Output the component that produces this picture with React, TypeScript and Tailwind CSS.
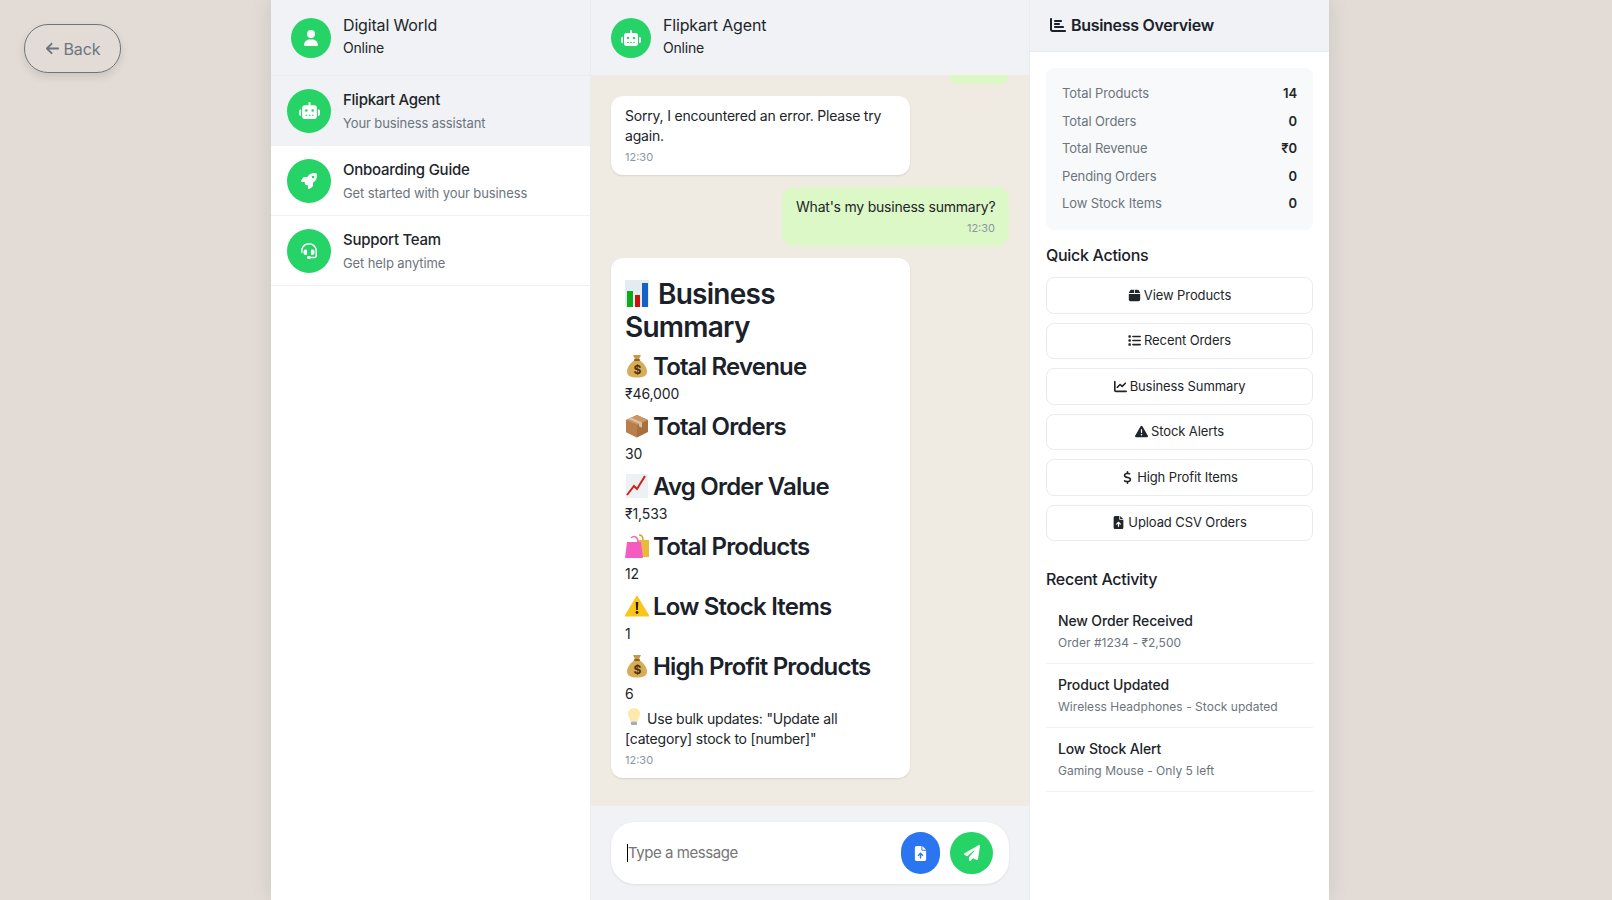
import type { ReactNode } from "react";
import {
  FaArrowLeft,
  FaBox,
  FaChartBar,
  FaChartLine,
  FaDollarSign,
  FaFileArrowUp,
  FaHeadset,
  FaList,
  FaPaperPlane,
  FaRobot,
  FaRocket,
  FaTriangleExclamation,
  FaUser,
} from "react-icons/fa6";

// the reference uses colour emoji and no colour emoji font is installed, so they are small drawings
function BarsEmoji() {
  return (
    <svg viewBox="0 0 24 27" className="inline-block w-[24px] h-[27px] align-[-3px] mr-[9px]">
      <rect width="24" height="27" fill="#e4ecf2" />
      <rect x="2" y="11" width="6" height="16" fill="#0eaa1e" />
      <rect x="10" y="15" width="5" height="12" fill="#c8140c" />
      <rect x="17" y="3" width="6" height="24" fill="#1463c4" />
    </svg>
  );
}

function MoneyEmoji() {
  return (
    <svg viewBox="0 0 24 24" className="inline-block w-[24px] h-[24px] align-[-3px] mr-[4px]">
      <path d="M8 1h8l-2.400 5h-3.200z" fill="#c99a45" />
      <path d="M9.500 6h5c4 3 7.500 7 7.500 11.500 0 4.500-4 6-10 6s-10-1.500-10-6C2 13 5.500 9 9.500 6z" fill="#d9ac58" />
      <rect x="9" y="5" width="6" height="2" rx="1" fill="#8a6428" />
      <text x="12" y="20" textAnchor="middle" fontSize="12" fontWeight="700" fill="#4a3312" fontFamily="Inter, sans-serif">$</text>
    </svg>
  );
}

function BoxEmoji() {
  return (
    <svg viewBox="0 0 24 24" className="inline-block w-[24px] h-[24px] align-[-3px] mr-[4px]">
      <path d="M12 1 23 6v12l-11 5.500L1 18V6z" fill="#a9703f" />
      <path d="M12 1 23 6l-11 5L1 6z" fill="#c99766" />
      <path d="M12 11v12.500L1 18V6z" fill="#b87f4c" />
      <path d="m6 3.500 11 5v5l-3-1V9.500L3.500 5z" fill="#dcc0a0" />
    </svg>
  );
}

function TrendEmoji() {
  return (
    <svg viewBox="0 0 24 24" className="inline-block w-[24px] h-[24px] align-[-3px] mr-[4px]">
      <rect x="1" width="22" height="24" fill="#eef1f4" />
      <path d="M2 21 9 12l3 3 8-13" fill="none" stroke="#d0201c" strokeWidth="2" />
    </svg>
  );
}

function BagsEmoji() {
  return (
    <svg viewBox="0 0 24 24" className="inline-block w-[24px] h-[24px] align-[-3px] mr-[4px]">
      <path d="M14 1c3 0 4 2 4 5" fill="none" stroke="#d9a520" strokeWidth="1.500" />
      <rect x="12" y="6" width="12" height="17" fill="#eab93c" />
      <path d="M6 4c3-3 7-1 7 4" fill="none" stroke="#f06cc0" strokeWidth="1.500" />
      <path d="M2 8h14l2 16H0z" fill="#f45cc0" />
    </svg>
  );
}

function WarnEmoji() {
  return (
    <svg viewBox="0 0 24 24" className="inline-block w-[24px] h-[24px] align-[-3px] mr-[4px]">
      <path d="M12 2 24 22H0z" fill="#fbc51a" stroke="#fbc51a" strokeLinejoin="round" />
      <path d="M10.700 8h2.600l-.5 8h-1.600z" fill="#222" />
      <circle cx="12" cy="18.500" r="1.400" fill="#222" />
    </svg>
  );
}

function BulbEmoji() {
  return (
    <svg viewBox="0 0 16 20" className="inline-block w-[14px] h-[20px] align-[-3px] mr-[6px] ml-[2px]">
      <path d="M8 0c4.500 0 7 3 7 6.500 0 3-2.500 4.500-3 8H4c-.5-3.500-3-5-3-8C1 3 3.500 0 8 0z" fill="#fde9a8" />
      <rect x="4.500" y="15" width="7" height="4" rx="1" fill="#a9acb0" />
    </svg>
  );
}

const chats = [
  { name: "Flipkart Agent", sub: "Your business assistant", icon: <FaRobot className="text-[21px]" />, active: true },
  { name: "Onboarding Guide", sub: "Get started with your business", icon: <FaRocket />, active: false },
  { name: "Support Team", sub: "Get help anytime", icon: <FaHeadset />, active: false },
];

const stats = [
  ["Total Products", "14"],
  ["Total Orders", "0"],
  ["Total Revenue", "₹0"],
  ["Pending Orders", "0"],
  ["Low Stock Items", "0"],
];

const actions = [
  { label: "View Products", icon: <FaBox /> },
  { label: "Recent Orders", icon: <FaList /> },
  { label: "Business Summary", icon: <FaChartLine /> },
  { label: "Stock Alerts", icon: <FaTriangleExclamation /> },
  { label: "High Profit Items", icon: <FaDollarSign /> },
  { label: "Upload CSV Orders", icon: <FaFileArrowUp /> },
];

const activity = [
  ["New Order Received", "Order #1234 - ₹2,500"],
  ["Product Updated", "Wireless Headphones - Stock updated"],
  ["Low Stock Alert", "Gaming Mouse - Only 5 left"],
];

const summary: { emoji: ReactNode; title: string; value: string }[] = [
  { emoji: <MoneyEmoji />, title: "Total Revenue", value: "₹46,000" },
  { emoji: <BoxEmoji />, title: "Total Orders", value: "30" },
  { emoji: <TrendEmoji />, title: "Avg Order Value", value: "₹1,533" },
  { emoji: <BagsEmoji />, title: "Total Products", value: "12" },
  { emoji: <WarnEmoji />, title: "Low Stock Items", value: "1" },
  { emoji: <MoneyEmoji />, title: "High Profit Products", value: "6" },
];

function Avatar({ big, children }: { big?: boolean; children: ReactNode }) {
  return (
    <div className={`rounded-full bg-[#25d366] text-white flex items-center justify-center shrink-0 text-[16px] ${big ? "w-11 h-11" : "w-10 h-10"}`}>
      {children}
    </div>
  );
}

function Header({ name, icon }: { name: string; icon: ReactNode }) {
  return (
    <div className="h-[75px] bg-[#f0f2f5] pl-5 flex items-center gap-3 shrink-0">
      <Avatar>{icon}</Avatar>
      <div className="pb-1">
        <div className="text-[16px] leading-[24px] tracking-[-0.17px] text-[#212529]">{name}</div>
        <div className="text-[14px] leading-[21px] tracking-[-0.2px] text-[#212529]">Online</div>
      </div>
    </div>
  );
}

export default function App() {
  return (
    <div className="h-[900px] overflow-hidden bg-[#e2dbd6] font-['Inter',sans-serif] text-[#212529] flex relative">
      <button className="absolute left-6 top-6 w-[97px] h-[49px] rounded-[24px] border border-[#6c757d] text-[#6c757d] text-[16px] tracking-[-0.1px] flex items-center justify-center gap-[4px] shadow-[0_4px_8px_rgba(0,0,0,0.1)]">
        <FaArrowLeft className="text-[15px]" />
        Back
      </button>

      <div className="ml-[271px] w-[1058px] flex bg-white shadow-[0_0_20px_rgba(0,0,0,0.1)]">
        <aside className="w-[320px] shrink-0 border-r border-[#e9ecef] flex flex-col">
          <div className="border-b border-[#e9ecef]">
            <Header name="Digital World" icon={<FaUser />} />
          </div>
          {chats.map((c) => (
            <div key={c.name} className={`h-[70px] pl-4 flex items-center gap-3 border-b border-[#f0f2f5] ${c.active ? "bg-[#f0f2f5]" : ""}`}>
              <Avatar big>{c.icon}</Avatar>
              <div>
                <div className="text-[15px] leading-[24px] tracking-[-0.25px] font-medium text-[#212529]">{c.name}</div>
                <div className="text-[13px] leading-[20px] mt-[1px] mb-[1px] tracking-[-0.1px] text-[#6c757d]">{c.sub}</div>
              </div>
            </div>
          ))}
        </aside>

        <main className="w-[439px] shrink-0 border-r border-[#e9ecef] flex flex-col">
          <Header name="Flipkart Agent" icon={<FaRobot className="text-[20px]" />} />
          <div className="flex-1 bg-[#efeae2] px-5 flex flex-col overflow-hidden">
            <div className="self-end w-[59px] h-[9px] bg-[#dcf8c6] rounded-b-lg" />
            <div className="mt-3 w-[299px] bg-white rounded-xl px-[14px] pt-[10px] pb-[10px] shadow-[0_1px_2px_rgba(0,0,0,0.1)]">
              <p className="text-[14px] leading-[20px] tracking-[-0.2px]">Sorry, I encountered an error. Please try again.</p>
              <p className="mt-[3px] text-[11px] leading-[16px] text-[#8c969f]">12:30</p>
            </div>
            <div className="mt-3 self-end w-[227px] h-[59px] bg-[#dcf8c6] rounded-xl px-[14px] pt-[10px] pb-[10px]">
              <p className="text-[14px] leading-[20px] tracking-[-0.22px] text-right whitespace-nowrap">What's my business summary?</p>
              <p className="mt-[3px] text-[11px] leading-[16px] text-[#8c969f] text-right">12:30</p>
            </div>
            <div className="mt-3 w-[299px] h-[520px] bg-white rounded-xl px-[14px] pt-[20px] shadow-[0_1px_2px_rgba(0,0,0,0.1)]">
              <h2 className="text-[28px] leading-[33px] font-semibold tracking-[-0.75px] text-[#1a2129]">
                <BarsEmoji />
                Business Summary
              </h2>
              {summary.map((s) => (
                <div key={s.title} className="mt-[8px]">
                  <h3 className="text-[24px] leading-[29px] font-semibold tracking-[-0.8px] text-[#1a2129] whitespace-nowrap">
                    {s.emoji}
                    {s.title}
                  </h3>
                  <p className="mt-[3px] text-[14px] leading-[20px] tracking-[-0.1px]">{s.value}</p>
                </div>
              ))}
              <p className="mt-[3px] text-[14px] leading-[20px] tracking-[-0.2px]">
                <BulbEmoji />
                Use bulk updates: "Update all [category] stock to [number]"
              </p>
              <p className="mt-[3px] text-[11px] leading-[16px] text-[#8c969f]">12:30</p>
            </div>
          </div>
          <div className="h-[94px] bg-[#f0f2f5] px-5 flex items-center shrink-0">
            <div className="w-full h-[62px] bg-white rounded-3xl shadow-[0_1px_3px_rgba(0,0,0,0.08)] pl-4 pr-4 flex items-center">
              <span className="w-px h-[18px] bg-black" />
              <span className="flex-1 pt-[1px] text-[15px] tracking-[-0.45px] text-[#757575]">Type a message</span>
              <button className="w-[39px] h-[42px] rounded-full bg-[#2b76f0] text-white text-[15px] flex items-center justify-center">
                <FaFileArrowUp />
              </button>
              <button className="ml-[10px] w-[43px] h-[42px] rounded-full bg-[#25d366] text-white text-[16px] flex items-center justify-center">
                <FaPaperPlane />
              </button>
            </div>
          </div>
        </main>

        <section className="flex-1 flex flex-col min-w-0">
          <div className="h-[52px] shrink-0 bg-[#f0f2f5] border-b border-[#e9ecef] pl-5 pb-[2px] flex items-center gap-[5px] font-semibold text-[16px] tracking-[-0.3px] text-[#1a2129]">
            <FaChartBar />
            Business Overview
          </div>
          <div className="px-4 pt-4">
            <div className="bg-[#f8f9fa] rounded-lg h-[162px] px-4 pt-[12px]">
              {stats.map(([label, value]) => (
                <div key={label} className="h-[27.5px] flex items-center justify-between text-[13px] tracking-[-0.1px]">
                  <span className="text-[#6c757d]">{label}</span>
                  <span className="font-semibold text-[#212529]">{value}</span>
                </div>
              ))}
            </div>
            <h3 className="mt-[15px] mb-[12px] text-[16px] leading-[20px] font-medium tracking-[-0.3px] text-[#1a2129]">Quick Actions</h3>
            <div className="flex flex-col gap-[9px]">
              {actions.map((a) => (
                <button key={a.label} className="h-[36.500px] rounded-lg border border-[#e9ecef] bg-white text-[13px] tracking-[-0.1px] text-[#212529] flex items-center justify-center gap-[3px]">
                  <span className="text-[13px]">{a.icon}</span>
                  {a.label}
                </button>
              ))}
            </div>
            <h3 className="mt-[28px] mb-[11px] text-[16px] leading-[20px] font-medium tracking-[-0.3px] text-[#1a2129]">Recent Activity</h3>
            {activity.map(([title, sub]) => (
              <div key={title} className="h-[64px] pl-3 pt-[10px] border-b border-[#f0f2f5]">
                <div className="text-[14px] leading-[22px] font-medium tracking-[-0.15px] text-[#212529]">{title}</div>
                <div className="text-[12px] leading-[21px] tracking-[0.03px] text-[#6c757d]">{sub}</div>
              </div>
            ))}
          </div>
        </section>
      </div>
    </div>
  );
}
